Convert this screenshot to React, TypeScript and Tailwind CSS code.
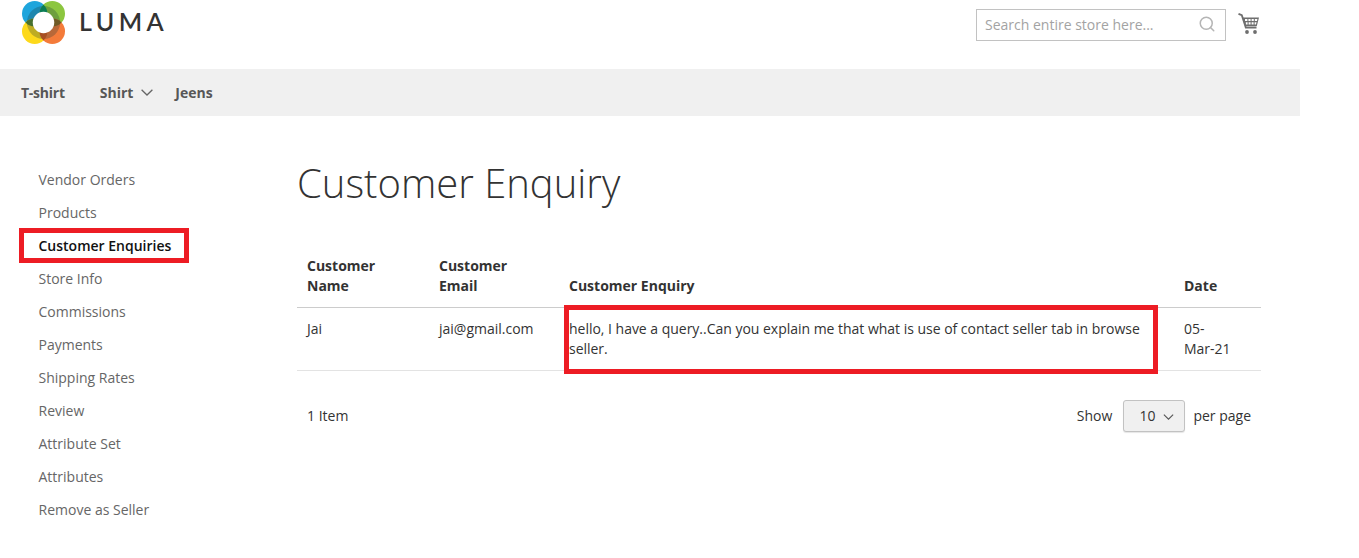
import { Search } from "lucide-react"

const links = [
  "Vendor Orders",
  "Products",
  "Customer Enquiries",
  "Store Info",
  "Commissions",
  "Payments",
  "Shipping Rates",
  "Review",
  "Attribute Set",
  "Attributes",
  "Remove as Seller",
]

const Logo = () => (
  <div className="flex items-center gap-[14px] ml-[1px] pt-[1px]">
    <svg width="43" height="43" viewBox="0 0 44 44">
      <defs>
        <clipPath id="blue"><circle cx="13" cy="13" r="13" /></clipPath>
        <clipPath id="green"><circle cx="31" cy="13" r="13" /></clipPath>
        <clipPath id="yellow"><circle cx="13" cy="31" r="13" /></clipPath>
      </defs>
      <circle cx="13" cy="13" r="13" fill="#1fa5dc" />
      <circle cx="31" cy="13" r="13" fill="#8cc63f" />
      <circle cx="13" cy="31" r="13" fill="#fdd91b" />
      <circle cx="31" cy="31" r="13" fill="#f47b3a" />
      <circle cx="22" cy="22" r="17" fill="#1b3a3a" fillOpacity="0.28" />
      <g clipPath="url(#blue)"><circle cx="31" cy="13" r="13" fill="#0b7d55" /></g>
      <g clipPath="url(#blue)"><circle cx="13" cy="31" r="13" fill="#47702f" /></g>
      <g clipPath="url(#green)"><circle cx="31" cy="31" r="13" fill="#6f5a26" /></g>
      <g clipPath="url(#yellow)"><circle cx="31" cy="31" r="13" fill="#a84f22" /></g>
      <circle cx="22" cy="22" r="11" fill="#ffffff" />
    </svg>
    <span className="font-['Lato',sans-serif] font-semibold text-[25px] leading-none tracking-[4.4px] text-[#333333] mb-[3px]">
      LUMA
    </span>
  </div>
)

const Cart = () => (
  <svg width="22" height="22" viewBox="0 0 22 22" className="text-[#6e6e6e] mt-[4px]">
    <path d="M0.5 0.8 L3.8 2.2 L7.8 14.5 H18.5" fill="none" stroke="currentColor" strokeWidth="1.8" />
    <path
      d="M4.5 4.5 H21 L18.8 13 H7.2 Z M7 6 V8 H9.4 V6 Z M10.4 6 V8 H12.6 V6 Z M13.6 6 V8 H15.8 V6 Z M16.8 6 V8 H19 L19.4 6 Z M7.8 9.2 V11.5 H9.6 V9.2 Z M10.6 9.2 V11.5 H12.6 V9.2 Z M13.6 9.2 V11.5 H15.6 V9.2 Z M16.6 9.2 V11.5 H18 L18.5 9.2 Z"
      fill="currentColor"
      fillRule="evenodd"
    />
    <circle cx="9" cy="19" r="1.9" fill="currentColor" />
    <circle cx="17" cy="19" r="1.9" fill="currentColor" />
  </svg>
)

const Chevron = ({ className }: { className: string }) => (
  <svg viewBox="0 0 12 7" className={className}>
    <path d="M0.6 0.8 L6 6 L11.4 0.8" fill="none" stroke="currentColor" strokeWidth="1.3" />
  </svg>
)

const Header = () => (
  <div className="h-[69px] flex items-start justify-between pl-[21px] pr-[40px]">
    <Logo />
    <div className="flex items-start gap-[12px] pt-[9px]">
      <div className="w-[250px] h-[32px] border border-[#c2c2c2] flex items-center justify-between pl-[8px] pr-[9px] text-[#a3a3a3] text-[14px]">
        <span className="-mt-[2px]">Search entire store here...</span>
        <Search className="w-[18px] h-[18px] -mt-[2px] text-[#b5b5b5]" strokeWidth={2} />
      </div>
      <Cart />
    </div>
  </div>
)

const Nav = () => (
  <div className="h-[47px] bg-[#f0f0f0] flex items-center pl-[21px] font-bold text-[14px] text-[#575757]">
    <span className="tracking-[-0.25px]">T-shirt</span>
    <span className="ml-[35px]">Shirt</span>
    <Chevron className="w-[12px] h-[7px] ml-[8px] text-[#666666]" />
    <span className="ml-[22px]">Jeens</span>
  </div>
)

const Sidebar = () => (
  <div className="w-[297px] pt-[47px] pl-[38.5px] shrink-0">
    {links.map((link) => (
      <div
        key={link}
        className={
          link === "Customer Enquiries"
            ? "h-[33px] flex items-center font-semibold text-[#111111]"
            : "h-[33px] flex items-center text-[#666666]"
        }
      >
        {link}
      </div>
    ))}
  </div>
)

const EnquiryTable = () => (
  <table className="w-[964px] table-fixed border-collapse mt-[39px] text-[14px] leading-[20px]">
    <thead>
      <tr className="border-b border-[#cccccc] font-bold text-[#333333]">
        <th className="w-[132px] px-[10px] pt-[8px] pb-[11px] text-left align-bottom">Customer Name</th>
        <th className="w-[130px] px-[10px] pt-[8px] pb-[11px] text-left align-bottom">Customer Email</th>
        <th className="px-[10px] pt-[8px] pb-[11px] text-left align-bottom">Customer Enquiry</th>
        <th className="w-[87px] px-[10px] pt-[8px] pb-[11px] text-left align-bottom">Date</th>
      </tr>
    </thead>
    <tbody>
      <tr className="border-b border-[#e3e3e3] text-[#333333]">
        <td className="px-[10px] pt-[11px] pb-[11px] align-top">Jai</td>
        <td className="px-[10px] pt-[11px] pb-[11px] align-top">jai@gmail.com</td>
        <td className="px-[10px] pt-[11px] pb-[11px] align-top tracking-[-0.02px]">
          hello, I have a query..Can you explain me that what is use of contact seller tab in browse seller.
        </td>
        <td className="px-[10px] pt-[11px] pb-[11px] align-top">
          05-
          <br />
          Mar-21
        </td>
      </tr>
    </tbody>
  </table>
)

const Pager = () => (
  <div className="w-[964px] flex items-center justify-between px-[10px] mt-[29px] text-[14px] text-[#333333]">
    <span className="-mt-[2px]">1 Item</span>
    <div className="flex items-center">
      <span className="-mt-[2px]">Show</span>
      <div className="ml-[11px] w-[62px] h-[32px] bg-[#f0f0f0] border border-[#c2c2c2] rounded-[3px] flex items-center pl-[15px] gap-[8px] shadow-[0_1px_1px_rgba(0,0,0,0.1)]">
        <span className="-mt-[2px]">10</span>
        <Chevron className="w-[11px] h-[6px] mt-[1px] text-[#555555]" />
      </div>
      <span className="ml-[8px] -mt-[2px]">per page</span>
    </div>
  </div>
)

export default function App() {
  return (
    <div className="relative w-[1359px] h-[558px] overflow-hidden bg-white font-['Open_Sans',sans-serif] text-[14px]">
      <div className="w-[1300px]">
        <Header />
        <Nav />
        <div className="flex">
          <Sidebar />
          <div>
            <h1 className="mt-[41px] text-[40px] leading-[52px] font-light text-[#333333]">Customer Enquiry</h1>
            <EnquiryTable />
            <Pager />
          </div>
        </div>
      </div>
      {/* red annotation boxes drawn over the screenshot */}
      <div className="absolute left-[19px] top-[228px] w-[170px] h-[35px] border-[5px] border-[#ed1c24]" />
      <div className="absolute left-[564px] top-[305px] w-[594px] h-[69px] border-[5px] border-[#ed1c24]" />
    </div>
  )
}
